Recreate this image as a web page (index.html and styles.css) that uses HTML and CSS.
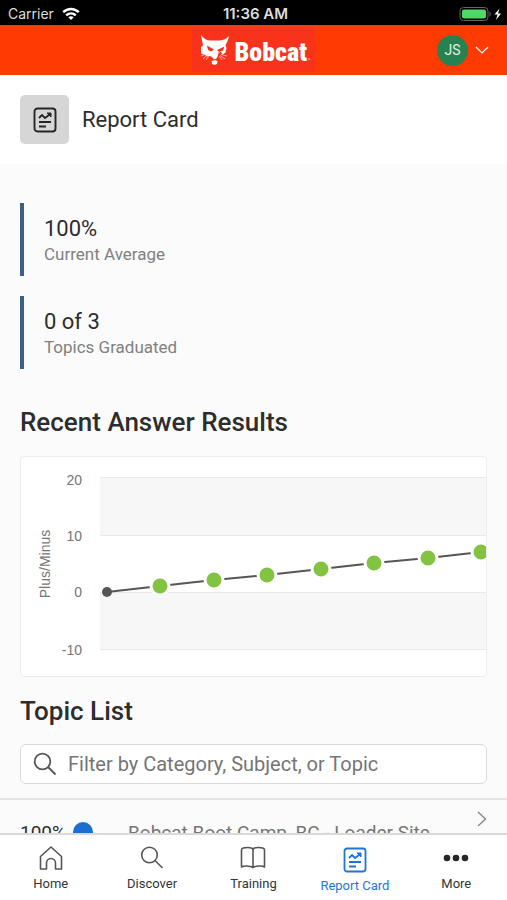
FILE: index.html
```html
<!DOCTYPE html>
<html lang="en">

<head>
  <meta charset="utf-8">
  <meta name="viewport" content="width=device-width, initial-scale=1">
  <title>Report Card</title>
  <link rel="stylesheet" href="styles.css">
</head>

<body>
  <div class="status-bar">
    <div class="carrier">
      <span>Carrier</span>
      <svg width="18" height="14" viewBox="0 0 18 14" fill="none" stroke="#fff" stroke-width="2.4">
        <path d="M1.2 5.2C5.8.9 12.2.9 16.8 5.2" />
        <path d="M4.2 8.4c2.8-2.5 6.8-2.5 9.6 0" />
        <path d="M9 13l-2.7-2.8c1.6-1.4 3.8-1.4 5.4 0z" fill="#fff" stroke="none" />
      </svg>
    </div>
    <span class="time">11:36 AM</span>
    <div class="battery">
      <svg width="44" height="16" viewBox="0 0 44 16">
        <rect x="1" y="1.5" width="28" height="13" rx="3.5" fill="none" stroke="#666" />
        <rect x="3" y="3.5" width="24" height="9" rx="2" fill="#4cd964" />
        <path d="M30.5 5.5c1.6.6 1.6 4.4 0 5z" fill="#666" />
        <path d="M40.5 2.5l-5 6h3l-1.5 5.5 5-6.500h-3z" fill="#fff" />
      </svg>
    </div>
  </div>

  <header class="app-header">
    <a href="#" class="logo">
      <svg width="30" height="31" viewBox="0 0 30 31" fill="#fff">
        <path d="M1 0c3 4 6 5.500 9 5.500h8.500C22.500 5.500 26 4 29 1c-.8 4-2 7-3.500 9l1 3-1 4.500-3 2-1.500-2.500-2.500.5-.5 3-1.500 3-2.500 1-2-2.500-2-1-3 .5-2.500-2-3-.5L1 16V12l2-1.500C2.500 7 1.500 4 1 0z" />
        <path d="M7 10.500l7 4-3 2-3-1.500zM24.500 11.500l-7.500 3.500 2 2 4-1.500z" fill="#f9331b" />
        <path d="M11.500 26l3-.8 3 .8-.5 3-2.500 1-2.500-1z" />
        <path d="M6 19l-5 2M7 20.500L3 24M8.500 21.500L6 25M21 19.500l6 1.500M20 20.500l5 3.500M19 21l3 4" stroke="#fff" stroke-width=".6" fill="none" />
      </svg>
      <span class="logo-text">Bobcat</span><span class="logo-dot">.</span>
    </a>
    <button class="user-menu" aria-label="User menu">
      <span class="avatar">JS</span>
      <svg width="14" height="8" viewBox="0 0 14 8" fill="none" stroke="#fff" stroke-width="1.2">
        <path d="M1 1l6 6 6-6" />
      </svg>
    </button>
  </header>

  <div class="page-title">
    <div class="title-icon">
      <svg width="24" height="26" viewBox="0 0 24 26" fill="none" stroke="#262626" stroke-width="1.9">
        <rect x="1.500" y="1.500" width="21" height="23" rx="3" />
        <path d="M6 11l3-3 3 3 4-3M6 15h12M6 19.500h7" />
        <path d="M14 6h4v4z" fill="#262626" stroke-width="1" />
      </svg>
    </div>
    <h1>Report Card</h1>
  </div>

  <main class="content">
    <div class="stat">
      <div class="stat-value">100%</div>
      <div class="stat-label">Current Average</div>
    </div>
    <div class="stat">
      <div class="stat-value">0 of 3</div>
      <div class="stat-label">Topics Graduated</div>
    </div>

    <h2>Recent Answer Results</h2>
    <div class="chart">
      <svg width="100%" height="219" role="img" aria-label="Recent answer results">
        <g class="bands">
          <rect x="79" y="20" width="100%" height="58" />
          <rect x="79" y="135" width="100%" height="57" />
        </g>
        <g class="grid">
          <path d="M79 20.500h2000M79 78.500h2000M79 135.500h2000M79 192.500h2000" />
        </g>
        <g class="axis">
          <text x="61" y="28">20</text>
          <text x="61" y="84">10</text>
          <text x="61" y="140">0</text>
          <text x="61" y="198">-10</text>
          <text class="axis-title" transform="translate(29 107) rotate(-90)">Plus/Minus</text>
        </g>
        <polyline class="line" points="86,135 139,129 193,123 246,118 300,112 353,106 407,101 460,95" />
        <circle cx="86" cy="135" r="5" fill="#55565a" />
        <g class="points">
          <circle cx="139" cy="129" r="9" />
          <circle cx="193" cy="123" r="9" />
          <circle cx="246" cy="118" r="9" />
          <circle cx="300" cy="112" r="9" />
          <circle cx="353" cy="106" r="9" />
          <circle cx="407" cy="101" r="9" />
          <circle cx="460" cy="95" r="9" />
        </g>
      </svg>
    </div>

    <h2>Topic List</h2>
    <label class="search">
      <svg width="24" height="24" viewBox="0 0 24 24" fill="none" stroke="#555" stroke-width="1.8">
        <circle cx="9.500" cy="9.500" r="7.800" />
        <path d="M15 15l7.500 7.500" />
      </svg>
      <input type="text" placeholder="Filter by Category, Subject, or Topic" aria-label="Filter topics">
    </label>

    <a href="#" class="topic">
      <span class="topic-score">100%</span>
      <span class="topic-dot"></span>
      <span class="topic-name">Bobcat Boot Camp, BC - Loader Site</span>
      <svg class="topic-arrow" width="10" height="16" viewBox="0 0 10 16" fill="none" stroke="#888" stroke-width="1.4">
        <path d="M1 1l7.500 7L1 15" />
      </svg>
    </a>
  </main>

  <nav class="tab-bar">
    <a href="#">
      <svg width="24" height="26" viewBox="0 0 24 26" fill="none" stroke="#555" stroke-width="1.6" stroke-linejoin="round">
        <path d="M1.500 11.500L12 2l10.500 9.500v12.500h-6v-6a4.500 4.500 0 0 0-9 0v6h-6z" />
      </svg>
      <span>Home</span>
    </a>
    <a href="#">
      <svg width="24" height="26" viewBox="0 0 24 26" fill="none" stroke="#555" stroke-width="1.6">
        <circle cx="9.500" cy="10" r="7.800" />
        <path d="M15 15.500l7.500 7.500" />
      </svg>
      <span>Discover</span>
    </a>
    <a href="#">
      <svg width="26" height="26" viewBox="0 0 26 26" fill="none" stroke="#555" stroke-width="1.6" stroke-linejoin="round">
        <path d="M13 5c0-2-2-2.500-5.500-2.500S1.500 3.500 1.500 5v17c2-1.500 8.500-1.500 11.500.5 3-2 9.500-2 11.500-.5V5c0-1.500-2.500-2.500-6-2.500S13 3 13 5zM13 5v17" />
      </svg>
      <span>Training</span>
    </a>
    <a href="#" class="active">
      <svg width="24" height="26" viewBox="0 0 24 26" fill="none" stroke="#1f75d6" stroke-width="1.8">
        <rect x="1.500" y="1.500" width="21" height="23" rx="2.500" />
        <path d="M6 11l3-3 3 3 4-3M6 15h12M6 19.500h7" />
        <path d="M14 6h4v4z" fill="#1f75d6" stroke-width="1" />
      </svg>
      <span>Report Card</span>
    </a>
    <a href="#">
      <svg width="26" height="26" viewBox="0 0 26 26" fill="#262626">
        <circle cx="4" cy="13" r="3.3" />
        <circle cx="13" cy="13" r="3.3" />
        <circle cx="22" cy="13" r="3.3" />
      </svg>
      <span>More</span>
    </a>
  </nav>
</body>

</html>
```
FILE: styles.css
```css
* {
  box-sizing: border-box;
}

body {
  font-family: Roboto, "Liberation Sans", sans-serif;
  background-color: #fbfbfb;
  color: #2d2d2d;
  display: flex;
  flex-direction: column;
  height: 100vh;
  margin: 0;
}

svg {
  display: block;
  flex: none;
}

a {
  color: inherit;
  text-decoration: none;
}

h1,
h2 {
  margin: 0;
}

.status-bar {
  display: grid;
  grid-template-columns: 1fr auto 1fr;
  align-items: center;
  flex: none;
  height: 25px;
  padding: 2px 4px 0 8px;
  background-color: #000;
  color: #ddd;
  font-family: Inter, "Liberation Sans", sans-serif;
  font-size: 14px;
}

.carrier {
  display: flex;
  align-items: center;
  gap: 8px;
}

.time {
  font-size: 15px;
  font-weight: 600;
}

.battery {
  justify-self: end;
}

.app-header {
  display: grid;
  grid-template-columns: 1fr auto 1fr;
  align-items: center;
  flex: none;
  height: 50px;
  padding: 0 18px;
  background-color: #ff3a03;
}

.logo {
  grid-column: 2;
  display: flex;
  align-items: center;
  height: 44px;
  padding: 0 4px 0 8px;
  background-color: #f9331b;
  color: #fff;
}

.logo-text {
  margin-top: 4px;
  margin-left: 5px;
  font-family: "Roboto Condensed", Roboto, "Liberation Sans", sans-serif;
  font-size: 26px;
  font-weight: 900;
}

.logo-dot {
  margin-top: 8px;
  font-size: 16px;
  opacity: 0.5;
}

.user-menu {
  justify-self: end;
  display: flex;
  align-items: center;
  gap: 7px;
  padding: 0;
  background: none;
  border: none;
  cursor: pointer;
}

.avatar {
  width: 31px;
  height: 31px;
  border-radius: 50%;
  background-color: #26834f;
  color: #e3f0e8;
  font-family: Roboto, sans-serif;
  font-size: 14px;
  line-height: 31px;
}

.page-title {
  display: flex;
  align-items: center;
  gap: 13px;
  flex: none;
  height: 89px;
  padding: 0 20px;
  background-color: #fff;
}

.page-title h1 {
  font-size: 22px;
  font-weight: 400;
}

.title-icon {
  display: flex;
  align-items: center;
  justify-content: center;
  width: 49px;
  height: 49px;
  border-radius: 5px;
  background-color: #d6d6d6;
}

.content {
  flex: 1;
  min-height: 0;
  padding: 39px 20px 0;
  overflow-y: auto;
  scrollbar-width: none;
}

.stat {
  height: 73px;
  margin-bottom: 20px;
  padding: 12px 0 0 20px;
  border-left: 4px solid #3c5f85;
}

.stat-value {
  font-size: 22px;
  line-height: 28px;
}

.stat-label {
  color: #808080;
  font-size: 17px;
  line-height: 22px;
}

h2 {
  font-size: 26px;
  font-weight: 500;
  line-height: 30px;
}

.stat + h2 {
  margin-top: 38px;
}

.chart {
  margin: 19px 0;
  border: 1px solid #ededed;
  border-radius: 4px;
  background-color: #fff;
  overflow: hidden;
}

.bands {
  fill: #f7f7f7;
}

.grid {
  stroke: #e9e9e9;
}

.axis {
  fill: #757575;
  font-family: "Liberation Sans", sans-serif;
  font-size: 14px;
  text-anchor: end;
}

.axis-title {
  text-anchor: middle;
}

.line {
  fill: none;
  stroke: #55565a;
  stroke-width: 2;
}

.points {
  fill: #82c341;
  stroke: #fff;
  stroke-width: 3;
}

.search {
  display: flex;
  align-items: center;
  gap: 11px;
  height: 40px;
  margin-top: 18px;
  padding: 0 12px;
  border: 1px solid #d9d9d9;
  border-radius: 6px;
  background-color: #fff;
}

.search input {
  flex: 1;
  min-width: 0;
  padding: 0;
  border: none;
  outline: none;
  background: none;
  font-family: inherit;
  font-size: 20px;
}

.search input::placeholder {
  color: #757575;
}

.topic {
  display: grid;
  grid-template-columns: 53px 55px 1fr auto;
  align-items: center;
  height: 66px;
  margin: 14px -20px 0;
  padding: 0 20px;
  border-top: 2px solid #e4e4e4;
  font-size: 19px;
}

.topic-dot {
  width: 20px;
  height: 20px;
  border-radius: 50%;
  background-color: #1a6fd0;
}

.topic-name {
  color: #757575;
}

.topic-arrow {
  align-self: start;
  margin-top: 11px;
}

.tab-bar {
  display: grid;
  grid-template-columns: repeat(5, 1fr);
  flex: none;
  height: 67px;
  border-top: 2px solid #d9d9d9;
  background-color: #fff;
}

.tab-bar a {
  display: flex;
  flex-direction: column;
  align-items: center;
  gap: 3px;
  padding-top: 10px;
  color: #333;
  font-size: 13px;
  line-height: 20px;
}

.tab-bar .active {
  padding-top: 12px;
  color: #1f75d6;
}
```
